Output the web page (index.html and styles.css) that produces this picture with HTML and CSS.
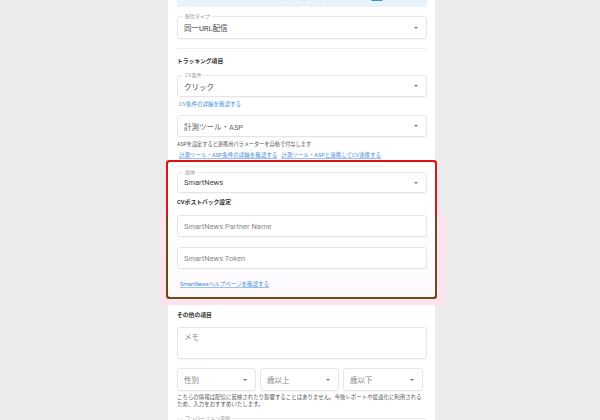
FILE: index.html
```html
<!DOCTYPE html>
<html lang="ja">
<head>
    <meta charset="UTF-8">
    <meta name="viewport" content="width=device-width, initial-scale=1.0">
    <title>配信設定</title>
    <link rel="stylesheet" href="styles.css">
</head>
<body>
    <div class="panel">
        <div class="notice">計測ツールやASPと連携する場合は、配信前に設定内容をご確認ください。<a href="#">詳細</a></div>

        <div class="field select">
            <span class="label">配信タイプ</span>
            <span class="value">同一URL配信</span>
            <span class="caret"></span>
        </div>

        <hr class="divider">

        <h3 class="heading">トラッキング項目</h3>
        <div class="field select cv">
            <span class="label">CV条件</span>
            <span class="value">クリック</span>
            <span class="caret"></span>
        </div>
        <a class="link first" href="#">CV条件の詳細を確認する</a>

        <div class="field select asp">
            <span class="value">計測ツール・ASP</span>
            <span class="caret"></span>
        </div>
        <p class="help">ASPを設定すると連携用パラメーターを自動で付与します</p>
        <div class="links">
            <a class="link under" href="#">計測ツール・ASP条件の詳細を確認する</a>
            <a class="link under" href="#">計測ツール・ASPと連携してCV連携する</a>
        </div>

        <div class="highlight">
            <div class="highlight-inner">
                <div class="field select media">
                    <span class="label">媒体</span>
                    <span class="value">SmartNews</span>
                    <span class="caret"></span>
                </div>
                <h4 class="subheading">CVポストバック設定</h4>
                <div class="field input partner"><span class="placeholder">SmartNews Partner Name</span></div>
                <div class="field input token"><span class="placeholder">SmartNews Token</span></div>
                <a class="link under help-link" href="#">SmartNewsヘルプページを確認する</a>
            </div>
        </div>

        <h3 class="heading other">その他の項目</h3>
        <div class="field memo"><span class="placeholder">メモ</span></div>

        <div class="select-row">
            <div class="field select small"><span class="placeholder">性別</span><span class="caret"></span></div>
            <div class="field select small"><span class="placeholder">歳以上</span><span class="caret"></span></div>
            <div class="field select small"><span class="placeholder">歳以下</span><span class="caret"></span></div>
        </div>
        <p class="help note">こちらの情報は配信に反映されたり影響することはありません。今後レポートや最適化に利用されるため、入力をおすすめいたします。</p>

        <div class="field select cost">
            <span class="label">コンバージョン単価</span>
        </div>
    </div>
</body>
</html>
```

FILE: styles.css
```css
html, body{
    margin: 0;
    height: 420px;
    overflow: hidden;
}

body{
    background: #ececec;
    font-family: Roboto, "Noto Sans CJK JP", sans-serif;
    color: #444;
}

.panel{
    position: relative;
    z-index: 0;
    width: 250px;
    margin: -10px 0 0 168px;
    padding: 0 8px 40px 9px;
    background: #fff;
}

.notice{
    height: 17px;
    padding: 0 8px;
    line-height: 15px;
    font-size: 5.5px;
    color: #666;
    background: #e8f3fc;
    white-space: nowrap;
    overflow: hidden;
}

.notice a{
    color: #3d8de0;
}

.field{
    position: relative;
    box-sizing: border-box;
    display: flex;
    align-items: center;
    height: 22px;
    padding: 0 8px 0 6px;
    border: 1px solid #e6e6e6;
    border-radius: 3px;
    box-shadow: 0 1px 1px rgba(0,0,0,0.03);
    font-size: 7.5px;
}

.field .label{
    position: absolute;
    top: -4px;
    left: 5px;
    padding: 0 2px;
    background: #fff;
    font-size: 5px;
    line-height: 7px;
    color: #999;
}

.field .value{
    color: #444;
}

.field .placeholder{
    color: #888;
}

.caret{
    margin-left: auto;
    width: 0;
    height: 0;
    border-left: 2px solid transparent;
    border-right: 2px solid transparent;
    border-top: 2.5px solid #777;
}

.select{
    margin-top: 9px;
    height: 23px;
}

.divider{
    margin: 9px 0 0;
    border: 0;
    border-top: 1px solid #f0f0f0;
}

.heading, .subheading{
    margin: 8px 0 0;
    font-size: 5.8px;
    line-height: 8px;
    font-weight: bold;
    color: #333;
}

.select.cv{
    margin-top: 10px;
    height: 22px;
}

.link{
    display: inline-block;
    font-size: 5.5px;
    line-height: 8px;
    color: #3d8de0;
    text-decoration: none;
}

.link.first{
    display: block;
    margin-top: 3px;
    padding-left: 2px;
}

.link.under{
    text-decoration: underline;
    text-decoration-color: #9cc3ee;
}

.select.asp{
    margin-top: 7px;
    height: 22px;
}

.select.asp .value{
    color: #666;
}

.help{
    margin: 3px 0 0;
    font-size: 5.2px;
    line-height: 8px;
    color: #555;
}

.links{
    display: flex;
    gap: 4px;
    margin-top: 3px;
    padding-left: 2px;
    height: 8px;
}

/* the highlighted SmartNews block */
.highlight{
    position: relative;
    margin: 1px -10px 0 -11px;
    padding: 2px;
    border-radius: 3px;
    background: linear-gradient(to bottom, #e01414 0, #e01414 56px, #6e4a17 56px);
}

.highlight::before{
    content: "";
    position: absolute;
    top: 55px;
    left: -6px;
    right: -9px;
    bottom: -6px;
    background: #fde3ee;
    z-index: -1;
}

.highlight-inner{
    padding: 10px 8px 7px 9px;
    border-radius: 2px;
    background: linear-gradient(to bottom, #fff 0, #fff 60px, #fdfafd 100%);
}

.select.media{
    margin-top: 0;
    height: 21px;
    background: #fff;
}

.subheading{
    margin-top: 5px;
}

.input{
    margin-top: 9px;
    background: #fff;
}

.input.token{
    margin-top: 10px;
}

.help-link{
    margin-top: 11px;
    padding-left: 3px;
}

.heading.other{
    margin-top: 12px;
}

.memo{
    margin-top: 8px;
    height: 32px;
    align-items: flex-start;
    padding-top: 5px;
    line-height: 10px;
}

.select-row{
    display: grid;
    grid-template-columns: 79px 79px 80px;
    gap: 4px;
    margin-top: 9px;
}

.select.small{
    margin-top: 0;
    height: 23px;
}

.help.note{
    margin-top: 3px;
    padding-right: 3px;
    font-size: 5.45px;
    line-height: 7px;
}

.select.cost{
    margin-top: 10px;
}
```
